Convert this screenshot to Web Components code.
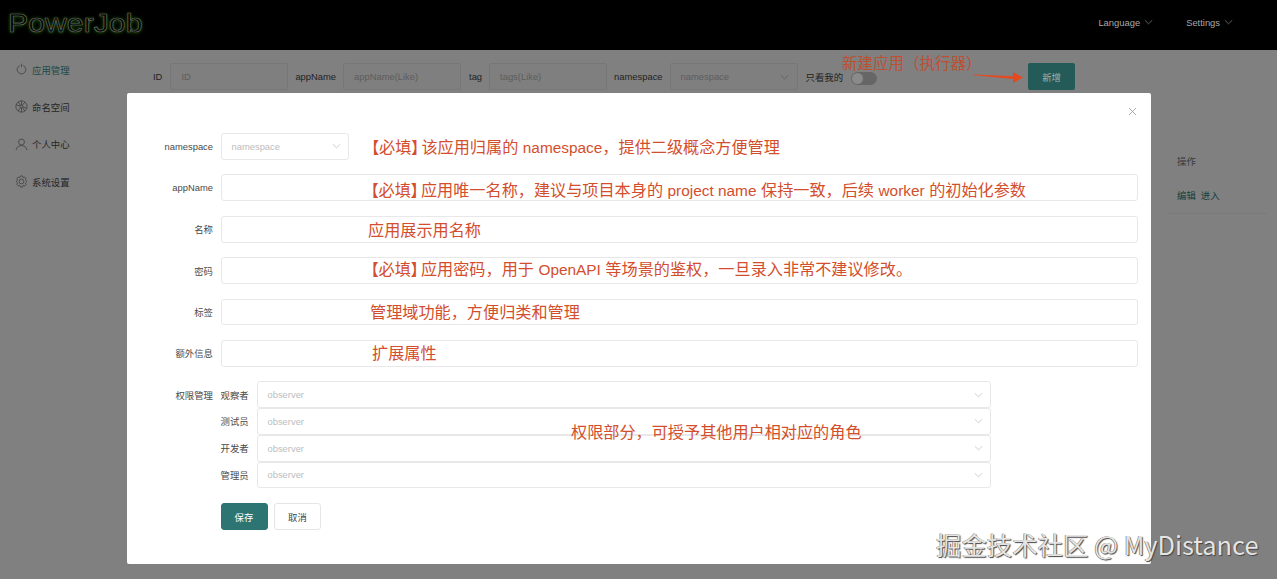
<!DOCTYPE html>
<html lang="zh-CN"><head><meta charset="utf-8"><title>PowerJob</title>
<style>
html,body{margin:0;padding:0;background:#808080}
body{font:9.4px "Liberation Sans","Noto Sans CJK SC",sans-serif;color:#333}
pj-note b{font-weight:400;font-feature-settings:"palt";margin:0 2px 0 4px}
pj-note i{font-style:normal;font-size:15.400px}
</style></head><body>
<pj-app>
  <pj-header slot="header"></pj-header>
  <pj-side slot="side">
    <pj-side-item icon="power" active>应用管理</pj-side-item>
    <pj-side-item icon="wheel">命名空间</pj-side-item>
    <pj-side-item icon="user">个人中心</pj-side-item>
    <pj-side-item icon="gear">系统设置</pj-side-item>
  </pj-side>
  <pj-main slot="main"></pj-main>
  <pj-modal slot="modal">
    <pj-row label="namespace"><pj-box select placeholder="namespace" style="width:128.500px"></pj-box><pj-note style="margin-left:18px;padding-top:2px"><b>【必填】</b>该应用归属的 <i>namespace</i>，提供二级概念方便管理</pj-note></pj-row>
    <pj-row label="appName"><pj-box grow pad="146"><pj-note style="padding-top:5px"><b>【必填】</b>应用唯一名称，建议与项目本身的 <i>project name</i> 保持一致，后续 <i>worker</i> 的初始化参数</pj-note></pj-box></pj-row>
    <pj-row label="名称"><pj-box grow pad="147.500"><pj-note style="padding-top:2px">应用展示用名称</pj-note></pj-box></pj-row>
    <pj-row label="密码"><pj-box grow pad="146"><pj-note style="padding-bottom:3px"><b>【必填】</b>应用密码，用于 <i>OpenAPI</i> 等场景的鉴权，一旦录入非常不建议修改。</pj-note></pj-box></pj-row>
    <pj-row label="标签"><pj-box grow pad="149.500"><pj-note>管理域功能，方便归类和管理</pj-note></pj-box></pj-row>
    <pj-row label="额外信息"><pj-box grow pad="151.500"><pj-note>扩展属性</pj-note></pj-box></pj-row>
    <pj-perms></pj-perms>
  </pj-modal>
  <pj-watermark slot="modal">掘金技术社区 @ MyDistance</pj-watermark>
</pj-app>
<script>
const ICONS={
 power:'<path d="M5.400 3A5 5 0 1 0 9.600 3"/><path d="M7.500 .8V4.800"/>',
 wheel:'<circle cx="7.500" cy="7.500" r="6.500"/><circle cx="7.500" cy="7.500" r="1.600"/><path d="M7.500 1V5.900M7.500 9.100V14M1.300 5.500 6 7M9 8l4.700 1.500M3.600 12.800 6.500 8.800M8.500 6.200 11.400 2.200M3.600 2.200 6.500 6.200M8.500 8.800l2.900 4"/>',
 user:'<circle cx="7.500" cy="4.600" r="3.400"/><path d="M1.300 14c.3-3.300 2.800-5.200 6.200-5.200s5.900 1.900 6.200 5.200"/>',
 gear:'<path d="M6.500 1H8.500L9.300 2.900 11.300 2.400 12.800 4 12 5.800 13.800 7.500 12 9.200 12.800 11 11.300 12.600 9.300 12.100 8.500 14H6.500L5.700 12.100 3.700 12.600 2.200 11 3 9.200 1.200 7.500 3 5.800 2.200 4 3.700 2.400 5.700 2.900Z" stroke-linejoin="round"/><circle cx="7.500" cy="7.500" r="2.700"/>'
};
const CHEV='<svg width="9" height="6" viewBox="0 0 9 6" fill="none" stroke="currentColor" stroke-width=".8"><path d="M.8 1.200 4.500 4.800 8.200 1.200"/></svg>';
function def(name,css,html,init){
  customElements.define(name,class extends HTMLElement{
    connectedCallback(){
      if(this.shadowRoot)return;
      const r=this.attachShadow({mode:'open'});
      r.innerHTML='<style>'+css+'</style>'+(typeof html==='function'?html(this):html);
      if(init)init(this,r);
    }
  });
}
def('pj-app',`:host{display:grid;width:1277px;height:579px;overflow:hidden;position:relative;grid-template:50px 1fr/137px 1fr;background:#808080}
 .h{grid-column:1/3;display:block}`,
 `<div class="h"><slot name="header"></slot></div><div><slot name="side"></slot></div><div><slot name="main"></slot></div><slot name="modal"></slot>`);
def('pj-header',`:host{display:flex;align-items:center;height:50px;background:#000;padding:0 44px 6px 7px;box-sizing:border-box;color:#a9a9a9;font-size:9.4px}
 .logo{font:400 25px/1 "Liberation Sans",sans-serif;color:#030503;-webkit-text-stroke:.6px #626a60;text-shadow:0 0 3px #173c06,0 1px 4px #1b440a;transform:scaleX(1.21);transform-origin:0 50%;position:relative;left:1px;top:1px}
 .sp{flex:1}.m{display:flex;align-items:center;gap:4px;margin-left:33px}.m svg{color:#777}`,
 `<div class="logo">PowerJob</div><div class="sp"></div><div class="m">Language ${CHEV}</div><div class="m">Settings ${CHEV}</div>`);
def('pj-side',`:host{display:flex;flex-direction:column;padding-top:1px}`,`<slot></slot>`);
def('pj-side-item',`:host{display:flex;align-items:center;height:37.300px;padding-left:15px;gap:4px;color:#262626;font-size:9.4px}
 :host([active]){color:#1e4a48}
 svg{width:13px;height:13px;color:#3e3e3e;flex:none}`,
 h=>`<svg viewBox="0 0 15 15" fill="none" stroke="currentColor" stroke-width=".9">${ICONS[h.getAttribute('icon')]}</svg><slot></slot>`);
def('pj-main',`:host{display:flex;flex-direction:column;padding-top:13px;color:#222;position:relative}
 .bar{display:flex;align-items:center;height:27px;padding-left:16px}
 .l{margin-right:7px}
 .i{box-sizing:border-box;height:26.500px;border:1px solid #777;border-radius:2px;width:118px;margin-right:7px;padding-left:10px;display:flex;align-items:center;justify-content:space-between;color:#5d5d5d;font-size:9.4px;line-height:1;background:#7f7f7f}
 .i svg{margin-right:8px;color:#5d5d5d}
 .sw{width:26px;height:13px;border-radius:7px;background:#666;margin:3px 0 0 8px;position:relative}
 .sw:before{content:"";position:absolute;left:1px;top:1px;width:11px;height:11px;border-radius:50%;background:#8a8a8a}
 .btn{margin-left:151px;width:47px;height:27px;border-radius:2px;background:#245a58;color:#9dafad;display:flex;align-items:center;justify-content:center}
 .note{position:absolute;left:705px;top:4px;font-size:15.500px;line-height:20px;color:#bf4f33;white-space:nowrap;z-index:1}
 .arrow{position:absolute;left:836px;top:21px}
 .tb{margin:64px 10px 0 auto;width:100px;box-sizing:border-box;padding-left:10px;color:#3a3a3a}
 .th{height:28px}.td{height:26px;display:flex;gap:5px;align-items:center}
 .td span{color:#143e3c}
 .line{height:1px;background:#7a7a7a;margin-left:-10px}`,
 `<div class="bar"><span class="l" style="margin-right:8px">ID</span><div class="i">ID</div>
 <span class="l">appName</span><div class="i">appName(Like)</div>
 <span class="l" style="margin-left:1px">tag</span><div class="i">tags(Like)</div>
 <span class="l">namespace</span><div class="i" style="width:128px">namespace ${CHEV}</div>
 <span style="margin-left:1px">只看我的</span><div class="sw"></div><div class="btn">新增</div></div>
 <div class="note">新建应用（执行器）</div>
 <svg class="arrow" width="52" height="14" viewBox="0 0 52 14"><path d="M1 3.400 40 5.200 40 1 50 6.500 40 12 40 8 1 4.200Z" fill="#e4491f"/></svg>
 <div class="tb"><div class="th">操作</div><div class="td"><span>编辑</span><span>进入</span></div><div class="line" style="margin-top:5px"></div></div>`);
def('pj-modal',`:host{position:absolute;left:127px;top:93px;width:1024px;height:471px;box-sizing:border-box;background:#fff;border-radius:2px;padding:40px 13px 0 0;display:flex;flex-direction:column;gap:14.600px;color:#444;z-index:2}
 .x{position:absolute;right:14px;top:14px;width:9px;height:9px;color:#999}`,
 `<svg class="x" viewBox="0 0 9 9" stroke="currentColor" stroke-width=".8"><path d="M1 1 8 8M8 1 1 8"/></svg><slot></slot>`);
def('pj-row',`:host{display:flex;align-items:center;height:26.800px}
 .l{flex:none;width:86px;margin-right:7.500px;text-align:right;color:#4a4a4a;font-size:9.4px}
 .c{flex:1;display:flex;align-items:center;min-width:0;height:100%}`,
 h=>`<div class="l">${h.getAttribute('label')}</div><div class="c"><slot></slot></div>`);
def('pj-box',`:host{display:flex;align-items:center;justify-content:space-between;box-sizing:border-box;height:100%;border:1px solid #e8e8e8;border-radius:3px;background:#fff;color:#bdbdbd;font-size:9.4px;padding-left:10px}
 :host([grow]){flex:1}
 svg{margin-right:7px;color:#c4c4c4}`,
 h=>{
  if(h.hasAttribute('pad'))h.style.paddingLeft=(+h.getAttribute('pad')-1)+'px';
  return `<slot></slot>${h.getAttribute('placeholder')||''}${h.hasAttribute('select')?CHEV:''}`;
 });
def('pj-note',`:host{display:block;font-size:16.150px;line-height:20px;color:#d34e2c;white-space:nowrap}`,`<slot></slot>`);
def('pj-perms',`:host{display:flex;flex-direction:column;position:relative;color:#4a4a4a}
 .rows{display:flex}
 .l{width:86px;margin-right:7.500px;text-align:right;height:26.800px;display:flex;align-items:center;justify-content:flex-end}
 .g{display:grid;grid-template-columns:36px 734px;grid-auto-rows:26.750px}
 .s{display:flex;align-items:center}
 pj-box{height:26.750px}
 .note{position:absolute;left:444px;top:41px;font-size:16.150px;line-height:20px;color:#d34e2c;white-space:nowrap}
 .btns{display:flex;gap:6.500px;margin:15px 0 0 93.500px}
 .b{box-sizing:border-box;width:47px;height:26.500px;border-radius:3px;display:flex;align-items:center;justify-content:center;border:1px solid #e6e6e6;color:#444}
 .p{background:#2d7573;border-color:#2d7573;color:#fff}`,
 `<div class="rows"><div class="l">权限管理</div><div class="g">
 <div class="s">观察者</div><pj-box select placeholder="observer"></pj-box>
 <div class="s">测试员</div><pj-box select placeholder="observer"></pj-box>
 <div class="s">开发者</div><pj-box select placeholder="observer"></pj-box>
 <div class="s">管理员</div><pj-box select placeholder="observer"></pj-box></div></div>
 <div class="note">权限部分，可授予其他用户相对应的角色</div>
 <div class="btns"><div class="b p">保存</div><div class="b">取消</div></div>`);
def('pj-watermark',`:host{position:absolute;left:936px;top:528px;font:25.400px/32px "Noto Sans CJK SC","Noto Sans",sans-serif;color:#e4e4e4;text-shadow:1px 1px 1px #444,-.5px -.5px 0 #666;white-space:nowrap;z-index:3}`,`<slot></slot>`);
</script>
</body></html>
